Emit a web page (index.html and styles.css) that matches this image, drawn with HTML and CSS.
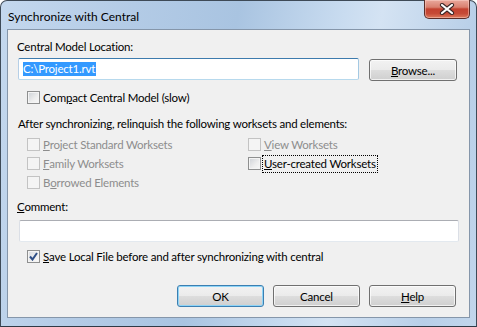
FILE: index.html
```html
<!DOCTYPE html>
<html lang="en">
  <head>
    <meta charset="UTF-8" />
    <title>Synchronize with Central</title>
    <link rel="stylesheet" href="styles.css">
  </head>
  <body>
    <div class="window">
      <!-- Title bar -->
      <div class="titlebar">
        <span class="title">Synchronize with Central</span>
        <button class="close-button">
          <svg width="16" height="12" viewBox="0 0 16 12">
            <path d="M3 2 L13 10 M13 2 L3 10" stroke="#3b2626" stroke-width="4.2" stroke-linecap="round" />
            <path d="M3 2 L13 10 M13 2 L3 10" stroke="#ffffff" stroke-width="2.2" stroke-linecap="round" />
          </svg>
        </button>
      </div>

      <!-- Dialog body -->
      <div class="client">
        <div class="field-label">Central Model Location:</div>
        <div class="location-row">
          <div class="textbox focused"><span class="selected">C:\Project1.rvt</span></div>
          <button class="btn browse-button"><u>B</u>rowse...</button>
        </div>

        <label class="check compact-check"><span class="box"></span>Com<u>p</u>act Central Model (slow)</label>

        <div class="note">After synchronizing, relinquish the following worksets and elements:</div>

        <div class="relinquish-grid">
          <div class="column">
            <label class="check disabled"><span class="box"></span><u>P</u>roject Standard Worksets</label>
            <label class="check disabled"><span class="box"></span><u>F</u>amily Worksets</label>
            <label class="check disabled"><span class="box"></span>B<u>o</u>rrowed Elements</label>
          </div>
          <div class="column">
            <label class="check disabled"><span class="box"></span><u>V</u>iew Worksets</label>
            <label class="check"><span class="box"></span><span class="focus-text"><u>U</u>ser-created Worksets</span></label>
          </div>
        </div>

        <div class="field-label comment-label"><u>C</u>omment:</div>
        <div class="textbox comment-box"></div>

        <label class="check save-check">
          <span class="box">
            <svg width="9" height="9" viewBox="0 0 9 9">
              <path d="M1 4.5 L3.5 7.5 L8 1" fill="none" stroke="#2f4f86" stroke-width="2" />
            </svg>
          </span>
          <u>S</u>ave Local File before and after synchronizing with central
        </label>

        <div class="dialog-buttons">
          <button class="btn default">OK</button>
          <button class="btn">Cancel</button>
          <button class="btn"><u>H</u>elp</button>
        </div>
      </div>
    </div>
  </body>
</html>
```

FILE: styles.css
```css
body {
  margin: 0;
  font-family: Lato, "Liberation Sans", sans-serif;
  font-size: 11.5px;
  letter-spacing: -0.2px;
  color: #000;
}
.window {
  width: 477px;
  height: 327px;
  box-sizing: border-box;
  border: 1px solid #3e4a57;
  border-bottom-color: #2f3a46;
  border-radius: 7px 7px 0 0;
  padding: 0 6px 8px 6px;
  display: flex;
  flex-direction: column;
  background: linear-gradient(100deg, #c4d8ee 0%, #b3cbe6 25%, #a9c4e1 45%, #c9dcf0 65%, #d4e3f3 72%, #b8cfe8 90%, #c2d6ec 100%);
}
.titlebar {
  height: 28px;
  display: flex;
  align-items: center;
  justify-content: space-between;
}
.title {
  padding-left: 1px;
  padding-top: 2px;
  color: #000;
  font-size: 12px;
  letter-spacing: 0;
}
.close-button {
  align-self: flex-start;
  width: 46px;
  height: 19px;
  margin-top: -1px;
  padding: 0;
  border: 1px solid #5b2d28;
  border-top: none;
  border-radius: 0 0 5px 5px;
  background: linear-gradient(#e9a89c 0%, #d9806f 40%, #c3412f 50%, #c64a36 75%, #dc7a5c 100%);
  box-shadow: inset 0 0 0 1px rgba(255, 220, 210, 0.45);
  display: flex;
  justify-content: center;
  align-items: center;
}
.client {
  flex-grow: 1;
  background-color: #f0f0f0;
  border: 1px solid #8596aa;
  padding: 10px 12px 10px 9px;
  display: flex;
  flex-direction: column;
}
.field-label {
  height: 14px;
  line-height: 14px;
}
.location-row {
  display: flex;
  margin-top: 4px;
  margin-left: 1px;
}
.textbox {
  box-sizing: border-box;
  height: 22px;
  background-color: #fff;
  border: 1px solid #dbdfe6;
  border-top-color: #abadb3;
  border-bottom-color: #e3e9ef;
  border-radius: 2px;
}
.textbox.focused {
  width: 341px;
  border-color: #3d7bad #a4c9e3 #b7d9ed #b5cfe7;
  padding: 3px 0 0 4px;
  line-height: 14px;
}
.selected {
  background-color: #3399ff;
  color: #fff;
  display: inline-block;
  padding-right: 1px;
}
.btn {
  box-sizing: border-box;
  width: 87px;
  height: 22px;
  padding: 0;
  font-family: inherit;
  font-size: 11.5px;
  letter-spacing: -0.2px;
  color: #000;
  border: 1px solid #707070;
  border-radius: 3px;
  background: linear-gradient(#f2f2f2 0%, #ebebeb 48%, #dddddd 52%, #cfcfcf 100%);
  box-shadow: inset 0 0 0 1px rgba(255, 255, 255, 0.7);
}
.browse-button {
  width: 88px;
  margin-left: 10px;
  margin-top: 1px;
}
.check {
  display: flex;
  align-items: center;
  height: 19px;
  line-height: 14px;
}
.box {
  box-sizing: border-box;
  width: 13px;
  height: 13px;
  margin-right: 3px;
  border: 1px solid #8e8f8f;
  background: linear-gradient(135deg, #cdd1d6 0%, #eeeeee 60%, #f8f8f8 100%);
  box-shadow: inset 0 0 0 1px #f4f4f4;
  display: flex;
  justify-content: center;
  align-items: center;
}
.compact-check {
  margin-top: 7px;
  margin-left: 10px;
}
.note {
  height: 14px;
  line-height: 14px;
  margin-top: 10px;
  margin-left: 1px;
}
.relinquish-grid {
  display: grid;
  grid-template-columns: 221px 1fr;
  margin-top: 4px;
  margin-left: 10px;
}
.check.disabled {
  color: #8d8d8d;
}
.check.disabled .box {
  border-color: #c3c3c3;
  background: #f4f4f4;
  box-shadow: none;
}
.focus-text {
  outline: 1px dotted #000;
  outline-offset: 1px;
}
.comment-label {
  margin-top: 8px;
}
.comment-box {
  margin-top: 6px;
  margin-left: 2px;
  width: 440px;
}
.save-check {
  margin-top: 5px;
  margin-left: 10px;
}
.save-check .box {
  background: linear-gradient(135deg, #d6dae0 0%, #f0f0f0 60%, #fafafa 100%);
}
.dialog-buttons {
  margin-top: auto;
  display: flex;
  justify-content: flex-end;
  gap: 9px;
  margin-right: 1px;
}
.btn.default {
  border-color: #3c7fb1;
  box-shadow: inset 0 0 0 1px #8ed4f7;
}
```
